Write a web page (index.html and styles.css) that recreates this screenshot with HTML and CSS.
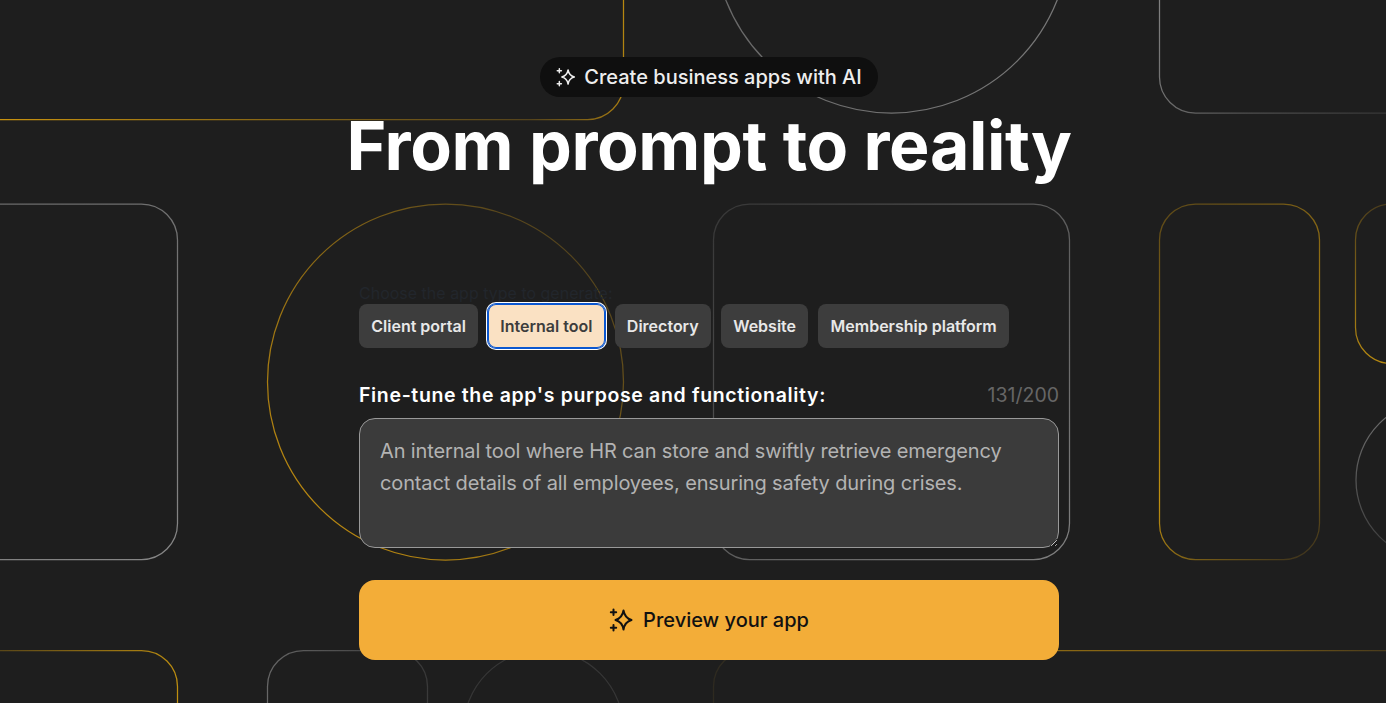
FILE: index.html
```html
<!DOCTYPE html>
<html lang="en">
<head>
<meta charset="utf-8">
<title>From prompt to reality</title>
<link rel="stylesheet" href="styles.css">
</head>
<body>
<svg class="backdrop" width="1386" height="703" viewBox="0 0 1386 703" fill="none" stroke-width="1.25" aria-hidden="true">
  <defs>
    <linearGradient id="g1" gradientUnits="userSpaceOnUse" x1="0" y1="120" x2="623" y2="0"><stop offset="0" stop-color="#c8920f"/><stop offset=".4" stop-color="#8a6814"/><stop offset=".82" stop-color="#54431c"/><stop offset="1" stop-color="#b8880f"/></linearGradient>
    <linearGradient id="gray1" gradientUnits="userSpaceOnUse" x1="720" y1="0" x2="1062" y2="113"><stop offset="0" stop-color="#686868"/><stop offset="1" stop-color="#787878"/></linearGradient>
    <linearGradient id="gray2" gradientUnits="userSpaceOnUse" x1="1159" y1="0" x2="1386" y2="113"><stop offset="0" stop-color="#808080"/><stop offset=".5" stop-color="#505050"/><stop offset="1" stop-color="#363636"/></linearGradient>
    <linearGradient id="gray3" gradientUnits="userSpaceOnUse" x1="0" y1="204" x2="177" y2="560"><stop offset="0" stop-color="#6a6a6a"/><stop offset="1" stop-color="#868686"/></linearGradient>
    <linearGradient id="c1" gradientUnits="userSpaceOnUse" x1="267" y1="560" x2="623" y2="204"><stop offset="0" stop-color="#c8920f"/><stop offset=".5" stop-color="#8a6814"/><stop offset="1" stop-color="#3e3520"/></linearGradient>
    <linearGradient id="gray4" gradientUnits="userSpaceOnUse" x1="713" y1="204" x2="1069" y2="560"><stop offset="0" stop-color="#363636"/><stop offset="1" stop-color="#808080"/></linearGradient>
    <linearGradient id="g2" gradientUnits="userSpaceOnUse" x1="1160" y1="204" x2="1365" y2="532"><stop offset="0" stop-color="#5a4718"/><stop offset=".65" stop-color="#c0900f"/><stop offset="1" stop-color="#332c1e"/></linearGradient>
    <linearGradient id="g3" gradientUnits="userSpaceOnUse" x1="1386" y1="204" x2="1356" y2="363"><stop offset="0" stop-color="#4a3c1c"/><stop offset="1" stop-color="#b88a10"/></linearGradient>
    <linearGradient id="gray5" gradientUnits="userSpaceOnUse" x1="1386" y1="400" x2="1386" y2="560"><stop offset="0" stop-color="#707070"/><stop offset="1" stop-color="#3a3a3a"/></linearGradient>
    <linearGradient id="g4" gradientUnits="userSpaceOnUse" x1="0" y1="650" x2="177" y2="703"><stop offset="0" stop-color="#5a4718"/><stop offset="1" stop-color="#c0900f"/></linearGradient>
    <linearGradient id="gray6" gradientUnits="userSpaceOnUse" x1="267" y1="703" x2="427" y2="650"><stop offset="0" stop-color="#686868"/><stop offset="1" stop-color="#363636"/></linearGradient>
    <linearGradient id="g5" gradientUnits="userSpaceOnUse" x1="713" y1="0" x2="1386" y2="0"><stop offset="0" stop-color="#2e2a20"/><stop offset=".5" stop-color="#8a6814"/><stop offset=".8" stop-color="#7a5c14"/><stop offset="1" stop-color="#4a3c1c"/></linearGradient>
  </defs>
  <rect x="-300" y="-236.500" width="923.500" height="356" rx="36" stroke="url(#g1)"/>
  <circle cx="891.500" cy="-65" r="178" stroke="url(#gray1)"/>
  <rect x="1159.500" y="-243" width="400" height="356" rx="36" stroke="url(#gray2)"/>
  <rect x="-178.500" y="204" width="356" height="355.500" rx="36" stroke="url(#gray3)"/>
  <circle cx="445.500" cy="382" r="178" stroke="url(#c1)"/>
  <rect x="713.500" y="204" width="356" height="355.500" rx="36" stroke="url(#gray4)"/>
  <rect x="1159.500" y="204" width="160" height="355.500" rx="36" stroke="url(#g2)"/>
  <rect x="1355.500" y="204" width="160" height="159.500" rx="36" stroke="url(#g3)"/>
  <circle cx="1436" cy="480" r="80" stroke="url(#gray5)"/>
  <rect x="-178.500" y="650.500" width="356" height="356" rx="36" stroke="url(#g4)"/>
  <rect x="267.500" y="650.500" width="160" height="356" rx="36" stroke="url(#gray6)"/>
  <circle cx="543.500" cy="730" r="80" stroke="#363636"/>
  <rect x="713.500" y="650.500" width="900" height="356" rx="36" stroke="url(#g5)"/>
</svg>

<main class="page">
  <div class="pill">
    <svg class="spark-small" width="20" height="20" viewBox="0 0 24 24" fill="none" stroke="currentColor" stroke-width="1.8" stroke-linecap="round" stroke-linejoin="round" aria-hidden="true"><path d="M14.500 3.500c.8 5 2.700 7.300 7.500 8.500-4.800 1.200-6.700 3.500-7.500 8.500-.8-5-2.700-7.300-7.500-8.500 4.800-1.200 6.700-3.500 7.500-8.500z"/><path d="M4 2v5M1.500 4.500h5M4 17.500v5M1.500 20h5"/></svg>
    <span>Create business apps with AI</span>
  </div>
  <h1 class="title">From prompt to reality</h1>

  <form class="panel">
    <p class="ghost-label">Choose the app type to generate:</p>
    <div class="chips">
      <button type="button" class="chip">Client portal</button>
      <button type="button" class="chip chip-active">Internal tool</button>
      <button type="button" class="chip">Directory</button>
      <button type="button" class="chip">Website</button>
      <button type="button" class="chip">Membership platform</button>
    </div>
    <div class="label-row">
      <label class="label" for="purpose">Fine-tune the app's purpose and functionality:</label>
      <span class="count">131/200</span>
    </div>
    <textarea id="purpose" class="purpose">An internal tool where HR can store and swiftly retrieve emergency contact details of all employees, ensuring safety during crises.</textarea>
    <button type="button" class="cta">
      <svg width="24" height="24" viewBox="0 0 24 24" fill="none" stroke="currentColor" stroke-width="2" stroke-linecap="round" stroke-linejoin="round" aria-hidden="true"><path d="M14.500 2.500c.9 5.500 3 8 8 9.500-5 1.500-7.100 4-8 9.500-.9-5.500-3-8-8-9.500 5-1.500 7.100-4 8-9.500z"/><path d="M4.500 1.500v5.500M1.800 4.200h5.400M4.500 17v5.500M1.800 19.800h5.400"/></svg>
      <span>Preview your app</span>
    </button>
  </form>
</main>
</body>
</html>
```
FILE: styles.css
```css
* { box-sizing: border-box; }
html, body { margin: 0; height: 100%; }
body {
  background: #1e1e1e;
  font-family: "Inter", "Liberation Sans", sans-serif;
  overflow: hidden;
  position: relative;
}
.backdrop { position: absolute; top: 0; left: 0; }
.page {
  position: relative;
  display: flex;
  flex-direction: column;
  align-items: center;
  padding: 57px 0 0 32px;
}
.pill {
  display: flex;
  align-items: center;
  gap: 8px;
  height: 40px;
  padding: 0 16px;
  border-radius: 20px;
  background: #0f0f0f;
  color: #eeeeee;
  font-size: 20px;
  font-weight: 500;
}
.title {
  margin: 10px 0 0;
  color: #ffffff;
  font-size: 68px;
  line-height: 76px;
  font-weight: 700;
  letter-spacing: -0.4px;
}
.panel {
  width: 700px;
  margin-top: 100px;
  display: flex;
  flex-direction: column;
}
.ghost-label {
  margin: 0 0 1px;
  height: 20px;
  line-height: 20px;
  font-size: 16px;
  color: #22262c;
}
.chips { display: flex; gap: 10px; }
.chip {
  height: 44px;
  padding: 0 12.25px;
  border: 0;
  border-radius: 8px;
  background: #3d3d3d;
  color: #e8e8e8;
  font-family: inherit;
  font-size: 16px;
  font-weight: 600;
}
.chip-active {
  background: #fae1c3;
  color: #3d3d3d;
  box-shadow: inset 0 0 0 1px #0b57d0, 0 0 0 1px #0b57d0, 0 0 0 2px #ffffff;
}
.label-row {
  display: flex;
  justify-content: space-between;
  align-items: center;
  margin-top: 32px;
  height: 30px;
}
.label { color: #ffffff; font-size: 19.5px; font-weight: 600; letter-spacing: 0.65px; }
.count { color: #666666; font-size: 19.5px; }
.purpose {
  display: block;
  width: 100%;
  height: 130px;
  margin-top: 8px;
  padding: 16px 20px;
  border: 1px solid #999999;
  border-radius: 16px;
  background: #3b3b3b;
  color: #b3b3b3;
  font-family: inherit;
  font-size: 20px;
  letter-spacing: -0.14px;
  line-height: 32px;
  outline: 0;
}
.cta {
  display: flex;
  align-items: center;
  justify-content: center;
  gap: 10px;
  height: 80px;
  margin-top: 32px;
  border: 0;
  border-radius: 16px;
  background: #f3ad38;
  color: #111111;
  font-family: inherit;
  font-size: 20px;
  font-weight: 500;
}
```
